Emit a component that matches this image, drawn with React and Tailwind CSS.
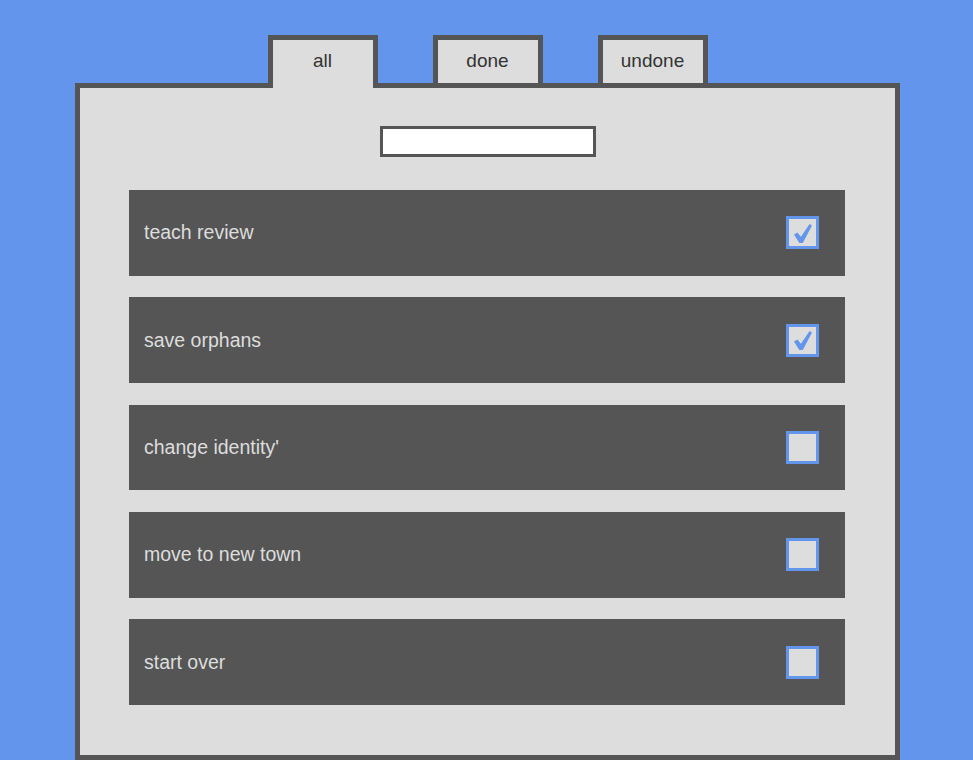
import React, { useState } from "react";

const initialTodos = [
  { id: 1, text: "teach review", done: true },
  { id: 2, text: "save orphans", done: true },
  { id: 3, text: "change identity'", done: false },
  { id: 4, text: "move to new town", done: false },
  { id: 5, text: "start over", done: false },
];

const tabs = ["all", "done", "undone"];

const Check = () => (
  <svg viewBox="0 0 18 19" className="w-[18px] h-[19px] mt-[1px]">
    <path
      d="M0 10.4 L3.4 8.4 L6.9 12.8 L15.6 0 L18 1.5 L8.8 18.9 L5.3 18.9 Z"
      fill="#6495ed"
    />
  </svg>
);

export default function App() {
  const [todos, setTodos] = useState(initialTodos);
  const [active, setActive] = useState("all");
  const [query, setQuery] = useState("");

  const toggle = (id) =>
    setTodos((list) =>
      list.map((t) => (t.id === id ? { ...t, done: !t.done } : t))
    );

  const visible = todos
    .filter((t) =>
      active === "all" ? true : active === "done" ? t.done : !t.done
    )
    .filter((t) => t.text.includes(query));

  return (
    <div
      className="min-h-[760px] bg-[#6495ed] pt-[35px] overflow-hidden"
      style={{ fontFamily: '"Liberation Sans", Arial, sans-serif' }}
    >
      {/* Tabs */}
      <div className="relative z-10 ml-[75px] w-[825px] flex justify-center gap-[55px] -mb-[5px]">
        {tabs.map((tab) => {
          const isActive = tab === active;
          return (
            <button
              key={tab}
              onClick={() => setActive(tab)}
              className={`w-[110px] h-[53px] border-[5px] border-[#555] bg-[#ddd] text-[19px] text-[#333] flex items-center justify-center ${
                isActive ? "border-b-0 pb-[5px]" : ""
              }`}
            >
              {tab}
            </button>
          );
        })}
      </div>

      {/* Panel */}
      <div className="ml-[75px] w-[825px] h-[677px] border-[5px] border-[#555] bg-[#ddd] pt-[38px]">
        <div className="flex justify-center">
          <input
            value={query}
            onChange={(e) => setQuery(e.target.value)}
            className="w-[216px] h-[31px] border-[3px] border-[#555] bg-white outline-none px-1 text-[16px]"
          />
        </div>

        <ul className="mt-[33px] ml-[49px] w-[716px] flex flex-col gap-[21.75px]">
          {visible.map((todo) => (
            <li
              key={todo.id}
              className="h-[85.6px] bg-[#555] flex items-center justify-between pl-[15px] pr-[26px]"
            >
              <span className="text-[19.5px] text-[#ddd]">{todo.text}</span>
              <button
                onClick={() => toggle(todo.id)}
                className="w-[33px] h-[33px] border-[3px] border-[#6495ed] bg-[#ddd] flex items-center justify-center"
              >
                {todo.done && <Check />}
              </button>
            </li>
          ))}
        </ul>
      </div>
    </div>
  );
}
